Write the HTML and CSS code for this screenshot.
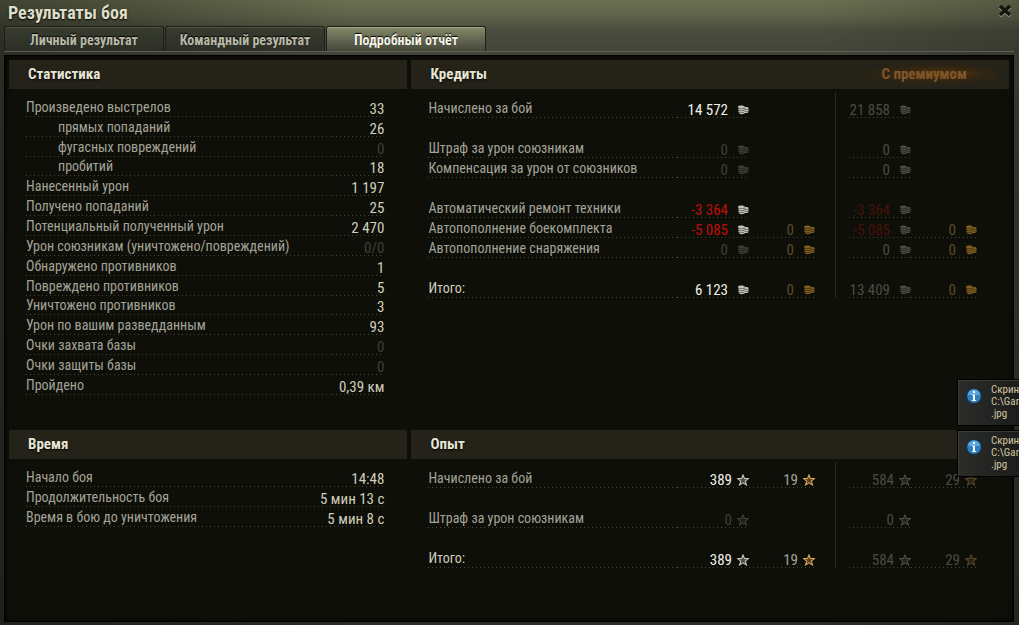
FILE: index.html
```
<!DOCTYPE html>
<html lang="ru">
<head>
	<meta charset="utf-8">
	<title>Результаты боя</title>
	<link rel="stylesheet" href="styles.css">
</head>
<body>
	<!-- icons -->
	<svg class="sprite" aria-hidden="true">
		<symbol id="coin" viewBox="0 0 12 12">
			<path fill="currentColor" d="M1 2.500C2 1.200 6 1 7.500 2.200L8 3.200c1.500-.5 3-.2 3.500.8v4c-.5 1-2 1.300-3.500 1l-1 .8c-1.500.6-4 .4-4.800-.4L2 8.500l-.8-.8L2 6.500 1.200 5.500 1.800 4.200 1 3.500z"/>
			<path fill="none" stroke="#0e0e09" stroke-opacity=".6" stroke-width=".8" d="M1.500 4c1.500.8 4 .8 5.500.2M2 6.200c1.500.6 3.500.6 5 .2M2 8.300c1.500.6 3.500.5 5 .1M7.300 3.500v3M8 5.200c1.200.5 2.500.4 3.500 0M7.500 7.200c1.200.5 2.800.4 4 0"/>
		</symbol>
		<symbol id="star" viewBox="0 0 12 12">
			<path fill="currentColor" fill-opacity=".35" stroke="currentColor" stroke-width="1.100" d="M6 .9l1.400 3.500 3.900.2-3 2.500 1.200 3.900L6 8.800 2.500 11l1.200-3.900-3-2.500 3.900-.2z"/>
		</symbol>
		<symbol id="info" viewBox="0 0 16 16">
			<circle cx="8" cy="8" r="7.800" fill="#14304a"/>
			<circle cx="8" cy="8" r="6.900" fill="#2f7fc0"/>
			<path d="M2 7a6 5.500 0 0 1 12 0z" fill="#5aa5dc"/>
			<path d="M6 6.500h3V12h1v1H6v-1h1V7.500H6zM7 3h2v2H7z" fill="#f4f8fb"/>
		</symbol>
	</svg>
	<div class="window">
		<header class="top">
			<h1>Результаты боя</h1>
			<button class="close" aria-label="Закрыть">
				<svg viewBox="0 0 16 16"><path d="M3 4l10 9M13 4L3 13" stroke="#9a9e84" stroke-width="3.500"/><path d="M3 3l10 9M13 3L3 12" stroke="#14150f" stroke-width="3.500"/></svg>
			</button>
		</header>
		<nav class="tabs">
			<button class="tab">Личный результат</button>
			<button class="tab">Командный результат</button>
			<button class="tab active">Подробный отчёт</button>
		</nav>
		<main class="content">
			<section class="panel">
				<h2>Статистика</h2>
				<table class="stats long">
					<tr><th>Произведено выстрелов</th><td>33</td></tr>
					<tr><th class="sub">прямых попаданий</th><td>26</td></tr>
					<tr><th class="sub">фугасных повреждений</th><td class="off">0</td></tr>
					<tr><th class="sub">пробитий</th><td>18</td></tr>
					<tr><th>Нанесенный урон</th><td>1 197</td></tr>
					<tr><th>Получено попаданий</th><td>25</td></tr>
					<tr><th>Потенциальный полученный урон</th><td>2 470</td></tr>
					<tr><th>Урон союзникам (уничтожено/повреждений)</th><td class="off">0/0</td></tr>
					<tr><th>Обнаружено противников</th><td>1</td></tr>
					<tr><th>Повреждено противников</th><td>5</td></tr>
					<tr><th>Уничтожено противников</th><td>3</td></tr>
					<tr><th>Урон по вашим разведданным</th><td>93</td></tr>
					<tr><th>Очки захвата базы</th><td class="off">0</td></tr>
					<tr><th>Очки защиты базы</th><td class="off">0</td></tr>
					<tr><th>Пройдено</th><td>0,39 км</td></tr>
				</table>
			</section>
			<section class="panel">
				<h2>Кредиты <span class="premium">С премиумом</span></h2>
				<table class="money">
					<colgroup><col><col class="c-silver"><col class="c-gold"><col class="c-gap"><col class="c-psilver"><col class="c-pgold"></colgroup>
					<tr><th>Начислено за бой</th><td class="white">14 572<svg><use href="#coin"/></svg></td><td class="none"></td><td class="split" rowspan="10"></td><td class="dim">21 858<svg><use href="#coin"/></svg></td><td class="none"></td></tr>
					<tr class="empty"><td colspan="3"></td><td colspan="2"></td></tr>
					<tr><th>Штраф за урон союзникам</th><td class="off">0<svg><use href="#coin"/></svg></td><td class="none"></td><td class="dim">0<svg><use href="#coin"/></svg></td><td class="none"></td></tr>
					<tr><th>Компенсация за урон от союзников</th><td class="off">0<svg><use href="#coin"/></svg></td><td class="none"></td><td class="dim">0<svg><use href="#coin"/></svg></td><td class="none"></td></tr>
					<tr class="empty"><td colspan="3"></td><td colspan="2"></td></tr>
					<tr><th>Автоматический ремонт техники</th><td class="red">-3 364<svg><use href="#coin"/></svg></td><td class="none"></td><td class="darkred">-3 364<svg><use href="#coin"/></svg></td><td class="none"></td></tr>
					<tr><th>Автопополнение боекомплекта</th><td class="red">-5 085<svg><use href="#coin"/></svg></td><td class="gold">0<svg><use href="#coin"/></svg></td><td class="darkred">-5 085<svg><use href="#coin"/></svg></td><td class="gold">0<svg><use href="#coin"/></svg></td></tr>
					<tr><th>Автопополнение снаряжения</th><td class="off">0<svg><use href="#coin"/></svg></td><td class="gold">0<svg><use href="#coin"/></svg></td><td class="dim">0<svg><use href="#coin"/></svg></td><td class="gold">0<svg><use href="#coin"/></svg></td></tr>
					<tr class="empty"><td colspan="3"></td><td colspan="2"></td></tr>
					<tr><th class="total">Итого:</th><td class="white">6 123<svg><use href="#coin"/></svg></td><td class="gold">0<svg><use href="#coin"/></svg></td><td class="dim">13 409<svg><use href="#coin"/></svg></td><td class="gold">0<svg><use href="#coin"/></svg></td></tr>
				</table>
			</section>
			<section class="panel">
				<h2>Время</h2>
				<table class="stats">
					<tr><th>Начало боя</th><td>14:48</td></tr>
					<tr><th>Продолжительность боя</th><td>5 мин 13 с</td></tr>
					<tr><th>Время в бою до уничтожения</th><td>5 мин 8 с</td></tr>
				</table>
			</section>
			<section class="panel">
				<h2>Опыт</h2>
				<table class="money exp">
					<colgroup><col><col class="c-silver"><col class="c-gold"><col class="c-gap"><col class="c-psilver"><col class="c-pgold"></colgroup>
					<tr><th>Начислено за бой</th><td class="white">389<svg><use href="#star"/></svg></td><td class="free">19<svg><use href="#star"/></svg></td><td class="split" rowspan="5"></td><td class="dim">584<svg><use href="#star"/></svg></td><td class="dim dimgold">29<svg><use href="#star"/></svg></td></tr>
					<tr class="empty"><td colspan="3"></td><td colspan="2"></td></tr>
					<tr><th>Штраф за урон союзникам</th><td class="off">0<svg><use href="#star"/></svg></td><td class="none"></td><td class="dim">0<svg><use href="#star"/></svg></td><td class="none"></td></tr>
					<tr class="empty"><td colspan="3"></td><td colspan="2"></td></tr>
					<tr><th class="total">Итого:</th><td class="white">389<svg><use href="#star"/></svg></td><td class="free">19<svg><use href="#star"/></svg></td><td class="dim">584<svg><use href="#star"/></svg></td><td class="dim dimgold">29<svg><use href="#star"/></svg></td></tr>
				</table>
			</section>
		</main>
	</div>
	<!-- system messages over the window -->
	<div class="messages">
		<div class="message">
			<svg><use href="#info"/></svg>
			<p>Скрин<br>C:\Gar<br>.jpg</p>
		</div>
		<div class="message">
			<svg><use href="#info"/></svg>
			<p>Скрин<br>C:\Gar<br>.jpg</p>
		</div>
	</div>
</body>
</html>
```
FILE: styles.css
```
* {
	box-sizing: border-box;
}
body {
	margin: 0;
	background: #0d0d09;
	font-family: "Roboto Condensed", Roboto, "Liberation Sans", sans-serif;
	font-size: 14px;
	line-height: 16px;
	color: #a3a396;
}
.sprite {
	display: none;
}
.window {
	display: flex;
	flex-direction: column;
	min-height: 100vh;
	padding: 0 5px 3px 4px;
	background:
		linear-gradient(to right, rgba(20, 22, 16, 0.5), rgba(20, 22, 16, 0) 35%, rgba(20, 22, 16, 0) 80%, rgba(20, 22, 16, 0.25)),
		linear-gradient(#6b7052, #5f634a 16px, #4a4c3d 30px, #434539 55px, #3a3c31 200px, #2b2c26);
}
/* title bar */
.top {
	display: flex;
	justify-content: space-between;
	align-items: center;
	height: 26px;
	padding: 0 1px 0 4px;
}
h1 {
	margin: 0;
	font-size: 18px;
	line-height: 20px;
	color: #deddc8;
	text-shadow: 0 1px 2px #000;
}
.close {
	width: 16px;
	height: 16px;
	margin-bottom: 4px;
	padding: 0;
	border: none;
	background: none;
	cursor: pointer;
}
.close svg {
	display: block;
	width: 16px;
	height: 16px;
}
/* tabs */
.tabs {
	display: flex;
	gap: 1px;
	height: 26px;
	border-bottom: 1px solid #5d6054;
}
.tab {
	width: 160px;
	padding: 2px 0 0;
	border: 1px solid #1d1e18;
	border-bottom: none;
	border-radius: 3px 3px 0 0;
	background: linear-gradient(#383b2f, #2d2f26);
	box-shadow: inset 0 1px 0 #51543f;
	font-family: inherit;
	font-size: 14px;
	font-weight: bold;
	color: #b9b9a8;
	text-shadow: 0 -1px 1px #000;
	cursor: pointer;
}
.tab.active {
	background: linear-gradient(#858a68, #44463a);
	box-shadow: inset 0 1px 0 #a4a98a;
	color: #f4f3e6;
}
/* content */
.content {
	flex: 1;
	display: grid;
	grid-template-columns: 2fr 3fr;
	grid-template-rows: auto 1fr;
	column-gap: 4px;
	margin-top: 3px;
	padding: 5px 5px 0;
	background: #0f0f0a;
	box-shadow: inset 0 0 8px #000, inset 0 0 0 1px #000;
}
.panel {
	min-height: 190px;
}
.panel:nth-child(-n+2) {
	min-height: 370px;
}
h2 {
	display: flex;
	justify-content: space-between;
	margin: 0;
	padding: 0 12px 1px 19px;
	background: #242219;
	font-size: 15px;
	line-height: 28px;
	color: #e6e5d4;
	text-shadow: 0 1px 2px #000;
}
.premium {
	width: 160px;
	padding-right: 30px;
	background: radial-gradient(ellipse at 62% 50%, #5a3509, rgba(60, 40, 12, 0.5) 35%, rgba(36, 34, 25, 0) 60%);
	text-align: right;
	text-shadow: none;
	color: #80572c;
}
table {
	border-collapse: collapse;
	border-spacing: 0;
}
th,
td {
	height: 20px;
	padding: 0;
	background: repeating-linear-gradient(to right, #45453a 0, #45453a 1px, transparent 1px, transparent 4px) no-repeat left bottom / 100% 1px;
	text-align: right;
	vertical-align: bottom;
	white-space: nowrap;
}
td {
	font-size: 15px;
}
th {
	padding-bottom: 2px;
	font-weight: normal;
	text-align: left;
}
.none,
.empty td {
	background: none;
}
.stats {
	width: calc(100% - 40px);
	margin: 8px 23px 0 17px;
}
.stats td {
	color: #cfcebb;
}
.long {
	height: 298px;
}
.long th,
.long td {
	height: 19px;
}
.stats .sub {
	padding-left: 32px;
}
.money {
	width: calc(100% - 49px);
	margin: 3px 32px 0 17px;
	table-layout: fixed;
}
.money tr:first-child > * {
	height: 26px;
}
.c-silver {
	width: 72px;
}
.c-gold {
	width: 66px;
}
.c-gap {
	width: 34px;
}
.c-psilver {
	width: 62px;
}
.c-pgold {
	width: 66px;
}
td.split {
	background: linear-gradient(#2a291e, #2a291e) no-repeat 20px 0 / 1px 100%;
}
.money svg {
	width: 12px;
	height: 12px;
	margin-left: 9px;
	vertical-align: -1px;
}
.money.exp svg {
	margin-left: 5px;
}
/* value colours */
.total {
	color: #cfcebb;
}
.white {
	color: #f0f0e8;
}
.white svg,
.red svg {
	color: #c4c4bc;
}
.stats .off,
.off {
	color: #3f3f37;
}
.dim {
	color: #4c4b42;
}
.red {
	color: #c00d08;
}
.darkred {
	color: #4a0f0b;
}
.darkred svg {
	color: #4c4b42;
}
.gold {
	color: #5c4c28;
}
.gold svg {
	color: #80601e;
}
.free {
	color: #a3a396;
}
.free svg {
	color: #d9a552;
}
.dimgold svg {
	color: #57452a;
}
/* messages */
.messages {
	position: absolute;
	top: 379px;
	right: 0;
	display: flex;
	flex-direction: column;
	gap: 4px;
}
.message {
	display: flex;
	gap: 9px;
	width: 62px;
	height: 47px;
	padding: 4px 0 0 8px;
	border: 1px solid #000;
	border-right: none;
	background: linear-gradient(to right, #2b2d2a, #1c1d1a);
	box-shadow: inset 1px 1px 0 #3b3c38;
}
.message svg {
	flex: none;
	width: 16px;
	height: 16px;
	margin-top: 4px;
}
.message p {
	margin: 0;
	font-size: 11px;
	line-height: 12px;
	color: #cfc5a0;
}
```
